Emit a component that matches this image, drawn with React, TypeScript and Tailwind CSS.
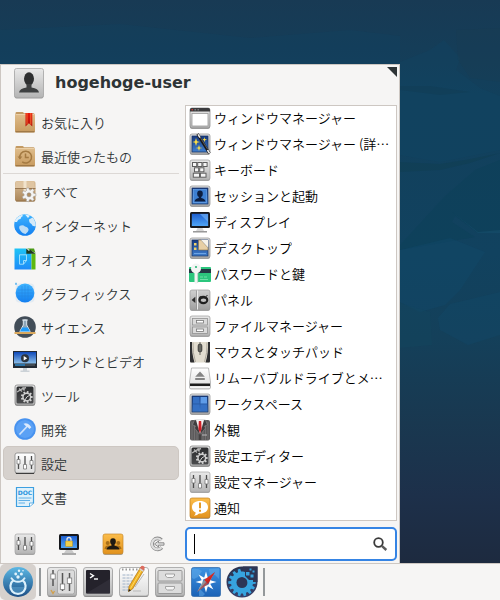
import { useState } from 'react';
import type { ReactNode } from 'react';

interface IconProps {
  size?: number;
  children?: ReactNode;
}

interface Entry {
  label: string;
  icon: ReactNode;
}

function Icon({ size = 22, children }: IconProps) {
  return (
    <svg
      width={size}
      height={size}
      viewBox={`0 0 ${size} ${size}`}
      fill="none"
      aria-hidden="true"
      className="shrink-0 overflow-visible"
    >
      {children}
    </svg>
  );
}

function gear(cx: number, cy: number, outer: number, inner: number, teeth: number) {
  const step = (Math.PI * 2) / teeth;
  const points: string[] = [];
  for (let i = 0; i < teeth; i++) {
    const a = i * step;
    const corners: [number, number][] = [
      [inner, -0.32],
      [outer, -0.2],
      [outer, 0.2],
      [inner, 0.32],
    ];
    corners.forEach(([r, k]) => {
      points.push(
        `${(cx + r * Math.cos(a + k * step)).toFixed(2)} ${(cy + r * Math.sin(a + k * step)).toFixed(2)}`,
      );
    });
  }
  return `M${points.join('L')}Z`;
}

// gradients shared by all the icons
const gradients: [string, string, string][] = [
  ['silver', '#e9e9e9', '#b4b4b4'],
  ['white', '#ffffff', '#dcdcdc'],
  ['grey', '#cfcfcf', '#9f9f9f'],
  ['dark', '#2b2c2e', '#4b4c4e'],
  ['navy', '#16397f', '#3f7fd0'],
  ['screen', '#1d5fd0', '#4fa4f5'],
  ['folder', '#dfbd8c', '#c79a5e'],
  ['box', '#d9bd97', '#a98457'],
  ['orange', '#fbbd4b', '#e2921d'],
  ['sky', '#1fc4f6', '#1e8bf8'],
  ['globe', '#3fb4ff', '#137ff0'],
  ['red', '#e8190c', '#b30f08'],
  ['video', '#0f48b8', '#8cc0ea'],
  ['xfce', '#5cb8e4', '#1d4f86'],
  ['compass', '#3d92e2', '#1b62b6'],
  ['logo', '#2a3350', '#38406a'],
];

function Gradients() {
  return (
    <svg className="absolute size-0" aria-hidden="true">
      <defs>
        {gradients.map(([id, from, to]) => (
          <linearGradient key={id} id={id} x1="0" y1="0" x2="0" y2="1">
            <stop offset="0" stopColor={from} />
            <stop offset="1" stopColor={to} />
          </linearGradient>
        ))}
      </defs>
    </svg>
  );
}

function Tile({ fill = 'url(#silver)', stroke = '#9b9b9b' }: { fill?: string; stroke?: string }) {
  return (
    <>
      <rect x="1" y="2" width="20" height="20" rx="2" fill="#6e6e6e" opacity="0.6" />
      <rect x="1" y="1" width="20" height="20" rx="2" fill={fill} stroke={stroke} strokeWidth="0.7" />
    </>
  );
}

function FolderShape() {
  return (
    <>
      <path d="M1.5 3.5V2.2Q1.5 1 2.7 1H8.5Q9.5 1 9.8 2.2H19.5Q20.5 2.2 20.5 3.5V8H1.5Z" fill="#c39a63" />
      <rect x="1" y="3" width="20" height="18.5" rx="1.5" fill="url(#folder)" />
      <path d="M1.5 20.8H20.5" stroke="#8f6c3d" />
      <path d="M2 3.5H20" stroke="#efd6ae" strokeWidth="0.8" />
    </>
  );
}

function FavoritesIcon() {
  return (
    <Icon>
      <FolderShape />
      <path d="M11.5 2H18.3V15.5L14.9 12.3L11.5 15.5Z" fill="url(#red)" />
      <path d="M13 2V13.5M16.8 2V13.5" stroke="#ff7d3b" strokeWidth="0.8" />
    </Icon>
  );
}

function RecentIcon() {
  return (
    <Icon>
      <FolderShape />
      <path d="M6 13.5A5.9 5.9 0 1 1 8.2 16.8" stroke="#a47a42" strokeWidth="1.5" />
      <path d="M3.5 11.5H8.3L6 14.5Z" fill="#a47a42" />
      <path d="M11.5 8.5V12.5H14.8" stroke="#a47a42" strokeWidth="1.5" />
    </Icon>
  );
}

function AllIcon() {
  return (
    <Icon>
      <rect x="1" y="1" width="20.5" height="20.5" rx="2" fill="url(#box)" />
      <path d="M2 1.5H20L21 8H1Z" fill="#dfc5a2" />
      <path d="M9.5 1H12.5V11H9.5Z" fill="#f1e3cc" />
      <path d="M1 8.5H21.5M2 21H20.5" stroke="#8b6a42" strokeWidth="0.8" />
      <path d={gear(15, 14.8, 7, 5, 7)} fill="#f4f4f4" stroke="#a7a19a" strokeWidth="0.6" />
      <circle cx="15" cy="14.8" r="2" fill="#b18d60" stroke="#8f8a83" strokeWidth="0.6" />
    </Icon>
  );
}

function InternetIcon() {
  return (
    <Icon>
      <circle cx="11" cy="11" r="10.8" fill="url(#globe)" />
      <path d="M.6 8Q2 2.5 8 .7L9 2Q7 2.7 6.5 5Q4 5 3 8Z" fill="#dff0fb" />
      <path d="M5.5 12Q9 10.5 11 12.5Q14.5 13 14.6 16Q14 18.5 11.5 20Q8 19.5 6 16Q4.5 14 5.5 12Z" fill="#bcdcf5" />
      <path d="M15 5.5L18.5 3.5Q21.8 7 21.7 12Q18.5 13 17.5 10Q15 9 15 5.5Z" fill="#d3e9f9" />
      <path d="M11 .4L16 1.5L14 4Z" fill="#e3f1fb" />
    </Icon>
  );
}

function OfficeIcon() {
  return (
    <Icon>
      <path d="M0.5 .5H12L17.5 6V21.5H0.5Z" fill="url(#sky)" />
      <path d="M17.5 5.5H21.5V21.5H17.5Z" fill="#5fb80e" />
      <path d="M13 .5H20L21.5 5Z" fill="#4b9b16" />
      <path d="M12.3 .5V5.7H21.5L16 1.5L15 3Z" fill="#203a20" />
      <path d="M5.5 6.8H12.5V12.5L9.5 16.2H5.5ZM12.5 12.5H9.5V16.2" stroke="#a7e2fd" strokeWidth="0.9" />
    </Icon>
  );
}

function GraphicsIcon() {
  return (
    <Icon>
      <rect x="1.5" y="1.5" width="19" height="19" rx="4" fill="#e3ebf2" />
      <circle cx="11" cy="11" r="9.4" fill="url(#globe)" />
      <path d="M4 8H18M3 11H19M4 14H18M8 4V18M11 3V19M14 4V18" stroke="#2787df" strokeWidth="0.5" />
      <rect x="1" y="0.8" width="2" height="2" fill="#74bff0" />
    </Icon>
  );
}

function ScienceIcon() {
  return (
    <Icon>
      <circle cx="11" cy="11" r="10.8" fill="#424d58" />
      <path d="M8.2 4H13.8M9.3 4V9L5.8 15.5H16.2L12.7 9V4Z" fill="#8da6b8" stroke="#dce6ee" strokeWidth="1" />
      <path d="M8.2 11.5H13.8L16 15.6H6Z" fill="#1d9bfb" />
      <rect x="0.5" y="16" width="21" height="2" fill="#d9a75c" />
    </Icon>
  );
}

function VideoIcon() {
  return (
    <Icon>
      <rect x="-1" y="1" width="24" height="17" fill="#232a33" />
      <rect x="0" y="2" width="22" height="11.5" fill="url(#video)" />
      <circle cx="11" cy="8.2" r="4" fill="#2c343d" />
      <path d="M9.7 6L13.2 8.2L9.7 10.4Z" fill="#fff" />
      <path d="M1 15H11" stroke="#34a4f5" strokeWidth="1.2" />
      <path d="M11 15H21" stroke="#5a626b" strokeWidth="1.2" />
      <path d="M9 18H13V20.5H15.5V22H6.5V20.5H9Z" fill="#ccd2d7" />
    </Icon>
  );
}

function GearsIcon() {
  return (
    <Icon>
      <Tile stroke="#777777" />
      <rect x="2.5" y="2.5" width="17" height="17" rx="1.5" fill="url(#dark)" />
      <path d={gear(12.8, 13, 6, 4.4, 9)} fill="#d0d0d0" />
      <circle cx="12.8" cy="13" r="3.1" fill="#333436" />
      <path d="M12.8 13L16 11M12.8 13L11 16" stroke="#d0d0d0" />
      <path d="M3 8L8 5L12 3.5M5 4.5L8 7.5M8.5 3.5L10.5 6.5" stroke="#b4b4b4" strokeWidth="1.4" />
    </Icon>
  );
}

function DevelopmentIcon() {
  return (
    <Icon>
      <circle cx="11" cy="11" r="10.8" fill="#4792ef" />
      <circle cx="11" cy="11" r="9" fill="#5ba1f5" />
      <path d="M5.5 16.5L13.5 8" stroke="#cfe3fc" strokeWidth="1.8" />
      <path d="M9.5 5.8Q13 4.5 15.5 7L17.3 9.3L15.5 11L13.5 9L12 8.2Z" fill="#dceafd" />
    </Icon>
  );
}

function MixerIcon({ bright = false }: { bright?: boolean }) {
  return (
    <Icon>
      <Tile fill={bright ? 'url(#white)' : 'url(#silver)'} stroke={bright ? '#777777' : '#a4a4a4'} />
      {bright && <path d="M2 21.5H20" stroke="#3c3c3c" />}
      <path d="M4.5 4V17M11 4V17M17.5 4V17" stroke="#4d4d4d" strokeWidth="1.3" />
      <path d="M3 7.5H6V12H3ZM9.5 12.5H12.5V17H9.5ZM16 8.5H19V13H16Z" fill="#fff" stroke="#777" strokeWidth="0.8" />
    </Icon>
  );
}

function DocumentIcon() {
  return (
    <Icon>
      <path d="M2.5 1.5H19.5V17L15.5 20.5H2.5Z" fill="#dff1fb" stroke="#3d9fe0" strokeWidth="1.2" />
      <text x="11" y="9" textAnchor="middle" fontSize="6" fontWeight="700" fontFamily="DejaVu Sans, sans-serif" fill="#2a93de">
        DOC
      </text>
      <path d="M4.5 12H17.5M4.5 14.5H16M4.5 17H11" stroke="#62b0e6" />
      <path d="M15.5 20.5V17H19.5" fill="#fff" stroke="#3d9fe0" strokeWidth="0.8" />
    </Icon>
  );
}

function LockIcon() {
  return (
    <Icon>
      <rect x="1" y="1" width="20" height="16" rx="1.5" fill="#15171b" />
      <rect x="3" y="3" width="16" height="12" fill="url(#screen)" />
      <path d="M8 17H14L16 20H6Z" fill="#c9c9c9" />
      <path d="M4 21H18" stroke="#777" strokeWidth="1.2" />
      <path d="M9 9V6.5A2 2 0 0 1 13 6.5V9" stroke="#e8e8e8" strokeWidth="1.3" />
      <rect x="7.5" y="8" width="7" height="5.5" rx="0.5" fill="#f1cf4b" stroke="#b58b1a" strokeWidth="0.5" />
    </Icon>
  );
}

function UsersIcon() {
  return (
    <Icon>
      <Tile fill="url(#orange)" stroke="#c98b2c" />
      <circle cx="5.7" cy="10" r="2" fill="#a86f19" />
      <circle cx="16.3" cy="10" r="2" fill="#a86f19" />
      <path d="M2.5 16Q3 12.5 5.7 12.5H16.3Q19 12.5 19.5 16Z" fill="#a86f19" />
      <ellipse cx="11" cy="8.5" rx="2.8" ry="3.2" fill="#1e1a13" />
      <path d="M4.5 16.5Q5 13.5 9.5 12.8V11H12.5V12.8Q17 13.5 17.5 16.5Z" fill="#1e1a13" />
    </Icon>
  );
}

function LogoutIcon() {
  return (
    <Icon>
      <path d="M15.5 7A5.5 5.5 0 1 0 15.8 14.5" stroke="#8c8c8c" strokeWidth="3.6" />
      <path d="M15.2 7.2A5.4 5.4 0 1 0 15.5 14.2" stroke="#dedede" strokeWidth="2.2" />
      <path d="M8.5 11L12.5 8V9.8H18V12.2H12.5V14Z" fill="#dedede" stroke="#858585" strokeWidth="0.9" />
    </Icon>
  );
}

function WindowIcon() {
  return (
    <Icon>
      <Tile stroke="#848484" />
      <path d="M1 4.5V2.5Q1 1 2.5 1H19.5Q21 1 21 2.5V4.5Z" fill="#3b3b3d" />
      <circle cx="3.2" cy="2.8" r="0.8" fill="#e33e35" />
      <path d="M5.5 2.8H7M8.5 2.8H10" stroke="#929292" />
      <rect x="3" y="6.5" width="16" height="12.5" fill="#fff" stroke="#9a9a9a" strokeWidth="0.8" />
    </Icon>
  );
}

function BluePanel({ children }: { children?: ReactNode }) {
  return (
    <Icon>
      <Tile stroke="#8a8a8a" />
      <rect x="3" y="3" width="16" height="16" fill="url(#navy)" stroke="#1b3565" strokeWidth="0.8" />
      {children}
    </Icon>
  );
}

function TweaksIcon() {
  return (
    <BluePanel>
      <path
        d="M7 5L8 8.2L11 9L8 9.8L7 13L6 9.8L3.5 9L6 8.2ZM10 12L10.8 14.4L13.5 15L10.8 15.6L10 18L9.2 15.6L6.5 15L9.2 14.4ZM15.5 4L16 6L18 6.7L16 7.3L15.5 9.3L15 7.3L13 6.7L15 6Z"
        fill="#ffdf42"
      />
      <path d="M8.5 1L20.5 20.5" stroke="#19191b" strokeWidth="2.6" />
      <path d="M9 1.3L11 4.6M18.5 17L20.5 20.3" stroke="#eee" strokeWidth="1.6" />
      <path d="M11 4L18.5 16" stroke="#8b8b8b" strokeWidth="0.6" />
    </BluePanel>
  );
}

function KeyboardIcon() {
  return (
    <Icon>
      <Tile />
      <g fill="#f5f5f5" stroke="#5e5e5e" strokeWidth="1">
        <rect x="3.5" y="3.5" width="4.2" height="4" />
        <rect x="8.7" y="3.5" width="4.2" height="4" />
        <rect x="13.9" y="3.5" width="4.2" height="4" />
        <rect x="5.5" y="8.8" width="4.2" height="4" />
        <rect x="10.7" y="8.8" width="4.2" height="4" />
        <rect x="4.3" y="14.2" width="6.2" height="4" />
        <rect x="11.4" y="14.2" width="5.6" height="4" />
      </g>
    </Icon>
  );
}

function SessionIcon() {
  return (
    <BluePanel>
      <rect x="4.5" y="4.5" width="13" height="13" fill="#3d7fd2" stroke="#6ca6ea" strokeWidth="0.7" />
      <ellipse cx="11" cy="8.8" rx="2.8" ry="3.3" fill="#0c1d3f" />
      <path d="M5.5 16.5Q6 13.5 9.8 13V11H12.2V13Q16 13.5 16.5 16.5Z" fill="#0c1d3f" />
    </BluePanel>
  );
}

function DisplayIcon() {
  return (
    <Icon>
      <rect x="1" y="1" width="20" height="16" rx="1.5" fill="#17181c" />
      <rect x="2.8" y="2.8" width="16.4" height="12.2" fill="url(#screen)" />
      <path d="M11 3H19V11Z" fill="#7ab9f9" opacity="0.6" />
      <path d="M8.5 17H13.5L15 20H7Z" fill="#d7d7d7" />
      <path d="M4 20.8H18" stroke="#878787" strokeWidth="1.3" />
    </Icon>
  );
}

function DesktopIcon() {
  return (
    <BluePanel>
      <path d="M5 6H7.5V8.5H5ZM5 10.5H7.5V13H5Z" fill="#f2d36a" />
      <path d="M9.5 3H12L19 10.5V13H9.5Z" fill="#e7cfa5" stroke="#8b7448" strokeWidth="0.6" />
      <path d="M12 3H19V10.5Z" fill="#f7f3ea" />
      <path d="M5 16.5H17" stroke="#6da4e4" />
    </BluePanel>
  );
}

function PasswordIcon() {
  return (
    <Icon>
      <rect x="0" y="4" width="22" height="15" rx="1" fill="#2bc67d" />
      <rect x="0" y="6" width="22" height="4" fill="#243a45" />
      <path d="M11 14H14M15 14H18M11 16.5H19" stroke="#6fe0a8" />
      <circle cx="7" cy="5.5" r="5" fill="#f3f5f4" />
      <path d="M5.5 9H8.7V19L7 21.5L5.5 20Z" fill="#f3f5f4" />
      <circle cx="7" cy="4" r="1.1" fill="#2bb676" />
      <path d="M8.7 10V20" stroke="#c3cdc9" strokeWidth="0.7" />
    </Icon>
  );
}

function PanelIcon() {
  return (
    <Icon>
      <Tile fill="url(#grey)" />
      <path d="M8.5 1.5V20.5" stroke="#ececec" />
      <path d="M7.5 1.5V20.5" stroke="#8c8c8c" strokeWidth="0.7" />
      <path d="M6.3 7.7V14L2.6 11Z" fill="#2d2d2d" />
      <ellipse cx="14.3" cy="11" rx="5" ry="4.2" fill="#202020" />
      <ellipse cx="14.5" cy="11.2" rx="2.8" ry="1.7" fill="#c2c2c2" />
      <path d="M10 8.5L12 7.5M17 7.3L18.5 6.5" stroke="#202020" />
    </Icon>
  );
}

function CabinetIcon() {
  return (
    <Icon>
      <Tile />
      <g fill="#dadada" stroke="#929292" strokeWidth="0.8">
        <rect x="3.5" y="3.5" width="15" height="6.5" />
        <rect x="3.5" y="12" width="15" height="6.5" />
      </g>
      <g fill="#fff" stroke="#777" strokeWidth="0.8">
        <rect x="7.5" y="5.5" width="7" height="2.5" />
        <rect x="7.5" y="14" width="7" height="2.5" />
      </g>
    </Icon>
  );
}

function MouseIcon() {
  return (
    <Icon>
      <rect x="1" y="1" width="20" height="20.5" rx="1.5" fill="#e2ddd0" />
      <path d="M1 1H3Q2.5 12 5.5 21.5H2Q1 21.5 1 20ZM21 1H19Q19.5 12 16.5 21.5H20Q21 21.5 21 20Z" fill="#2e2f31" />
      <path d="M4 1.5Q3.5 12 6.5 21M18 1.5Q18.5 12 15.5 21" stroke="#a9a498" strokeWidth="0.9" />
      <rect x="9.2" y="3" width="3.6" height="8" rx="1.8" fill="#696963" stroke="#333" strokeWidth="0.9" />
      <path d="M11 1V3M11 11V14" stroke="#6c6a63" />
    </Icon>
  );
}

function RemovableIcon() {
  return (
    <Icon>
      <path d="M2.5 1H19.5L21.5 15V20Q21.5 22 20 22H2Q.5 22 .5 20V15Z" fill="url(#white)" stroke="#a2a2a2" strokeWidth="0.7" />
      <path d="M1 16.5H21V19H1Z" fill="#1d1d1d" />
      <path d="M1 20.2H21" stroke="#fff" />
      <path d="M11 4.5L15.8 9.8H6.2Z" fill="#858585" />
      <rect x="6.2" y="11" width="9.6" height="2" fill="#858585" />
    </Icon>
  );
}

function WorkspaceIcon() {
  return (
    <BluePanel>
      <path d="M4 4H10.5V10.5H4ZM4 11.5H10.5V18H4ZM11.5 11.5H18V18H11.5Z" fill="#3570c4" />
      <path d="M11.5 4H18V10.5H11.5Z" fill="#5f9ce8" />
    </BluePanel>
  );
}

function AppearanceIcon() {
  return (
    <Icon>
      <rect x="1" y="1" width="20" height="20.5" rx="2" fill="#5c5a5b" />
      <path d="M3 3V21M5.5 4V21M8 10V21M14 10V21M16.5 4V21M19 3V21" stroke="#7d7b7c" strokeWidth="0.7" />
      <path d="M5.5 1L3.5 6L6.5 7L5.5 9L11 16L16.5 9L15.5 7L18.5 6L16.5 1Z" fill="#403e3f" stroke="#979596" strokeWidth="0.5" />
      <path d="M7 1H15L11 15Z" fill="#f2f0f0" />
      <path d="M9.8 2H12.2L12.6 10L11 14L9.4 10Z" fill="#cf1f25" />
      <path d="M13 16H18" stroke="#b9b7b8" />
      <path d="M11 15V21" stroke="#2c2a2b" />
    </Icon>
  );
}

function NotificationIcon() {
  return (
    <Icon>
      <Tile fill="url(#orange)" stroke="#c07f20" />
      <path d="M11 4C6 4 3 6.5 3 10.2C3 12.6 4.5 14.5 6.7 15.5Q6.7 17.5 5 18.7Q8.5 18.5 10 16.5H11C16 16.5 19 13.8 19 10.2C19 6.5 16 4 11 4Z" fill="#fff" />
      <path d="M11 5.5V11.3M11 12.8V14.8" stroke="#e39a25" strokeWidth="2" />
    </Icon>
  );
}

function AvatarIcon() {
  return (
    <Icon size={30}>
      <rect x="0.5" y="1.5" width="29" height="29" rx="2" fill="#999" />
      <rect x="0.5" y="0.5" width="29" height="29" rx="2" fill="url(#silver)" stroke="#a8a8a8" strokeWidth="0.8" />
      <ellipse cx="15" cy="10.8" rx="5" ry="6.5" fill="#2e2f30" />
      <path d="M5 24.5Q5.5 20.5 12.5 19.5V16H17.5V19.5Q24.5 20.5 25 24.5Z" fill="#3e4041" />
    </Icon>
  );
}

function BigTile({ fill = 'url(#silver)' }: { fill?: string }) {
  return (
    <>
      <rect x="0.5" y="1.5" width="29" height="28.5" rx="2.5" fill="#858585" />
      <rect x="0.5" y="0.5" width="29" height="28.5" rx="2.5" fill={fill} stroke="#a0a0a0" strokeWidth="0.8" />
    </>
  );
}

function StartIcon() {
  return (
    <Icon size={30}>
      <circle cx="15" cy="15" r="15" fill="url(#xfce)" />
      <path d="M10.5 13.2A7.6 7.6 0 1 0 19.5 13.2" stroke="#dcf0fb" strokeWidth="2.2" />
      <path d="M8.5 11.2Q11 14.8 15 14.8T21.5 11.2" stroke="#dcf0fb" strokeWidth="2" strokeLinecap="round" />
      <path d="M8.6 20H21.4Q20.5 25.5 15 25.8T8.6 20Z" fill="#6bb3dc" opacity="0.4" />
      <g fill="#e2f3fc">
        <circle cx="15" cy="10" r="1.7" />
        <circle cx="18.4" cy="7" r="1.5" />
        <circle cx="12.7" cy="7" r="1.4" />
        <circle cx="16" cy="3.8" r="1.2" />
        <circle cx="20" cy="3.8" r="0.8" />
      </g>
    </Icon>
  );
}

function BigMixerIcon() {
  return (
    <Icon size={30}>
      <BigTile />
      <rect x="10.5" y="3" width="17" height="24" rx="2" fill="#dcdcdc" stroke="#a1a1a1" strokeWidth="0.8" />
      <path d="M6 3V19M15.5 6V24M22.5 6V24" stroke="#555" strokeWidth="1.5" />
      <g fill="#fff" stroke="#7c7c7c" strokeWidth="0.8">
        <rect x="3.8" y="7" width="4.4" height="5" />
        <rect x="13.3" y="17" width="4.4" height="5.5" />
        <rect x="20.3" y="11" width="4.4" height="5.5" />
      </g>
      <path d="M4 23L6 26.5L7.5 24" stroke="#d3a04a" strokeWidth="1.3" />
    </Icon>
  );
}

function TerminalIcon() {
  return (
    <Icon size={30}>
      <BigTile />
      <rect x="3" y="3" width="24" height="23.5" rx="1" fill="#24222b" />
      <path d="M3 26.5L27 12V26.5Z" fill="#35323d" opacity="0.7" />
      <path d="M7 6.5L10.5 8.7L7 11" stroke="#fff" strokeWidth="1.4" />
      <path d="M11 12H15" stroke="#fff" strokeWidth="1.4" />
    </Icon>
  );
}

function EditorIcon() {
  return (
    <Icon size={30}>
      <BigTile fill="url(#white)" />
      <path d="M3 2.5H27" stroke="#9a9a9a" strokeWidth="2" strokeDasharray="1.5 2" />
      <path d="M3.5 8H14M3.5 11H12.5M3.5 14H13M3.5 17H11.5M3.5 20H11M3.5 23H10" stroke="#a0b2c8" strokeDasharray="3 1" />
      <path d="M16 20L25 7M14 24H22" stroke="#b9b9b9" />
      <path d="M21.5 .5L25 2.8L13.5 22L9.5 24.5L10 19.5Z" fill="#f2b321" stroke="#a86f12" strokeWidth="0.7" />
      <path d="M23 2L11.5 21.5" stroke="#fbd868" />
      <path d="M20.8 1.5L22.3 -1Q24.5 -2 25.8 .2L24.5 4Z" fill="#dc6b5e" />
      <path d="M20.7 1.8L24.3 4.1" stroke="#d6d6d6" strokeWidth="1.6" />
      <path d="M10 22L9.3 24.8L12 23.5Z" fill="#222" />
    </Icon>
  );
}

function BigCabinetIcon() {
  return (
    <Icon size={30}>
      <BigTile />
      <g fill="#dcdcdc" stroke="#919191" strokeWidth="0.9">
        <rect x="3" y="3.5" width="24" height="10.5" rx="1" />
        <rect x="3" y="16" width="24" height="10.5" rx="1" />
      </g>
      <g fill="#f4f4f4" stroke="#919191" strokeWidth="0.8">
        <path d="M10.5 7H19.5V9L17.5 10.5H12.5L10.5 9Z" />
        <path d="M10.5 19.5H19.5V21.5L17.5 23H12.5L10.5 21.5Z" />
      </g>
    </Icon>
  );
}

function BrowserIcon() {
  return (
    <Icon size={30}>
      <rect x="0.5" y="0.5" width="29" height="29" rx="2" fill="url(#compass)" stroke="#2b65a8" strokeWidth="0.7" />
      <path d="M1 2Q7 1 11 4L7 10L3 12L1 11ZM18 2L28 1.5V12L24 8L19 9ZM8 21L14 27L12 29H8Z" fill="#66ade9" opacity="0.5" />
      <path d="M15 4.5L16.8 10.8L22.4 7.6L19.2 13.2L25.5 15L19.2 16.8L22.4 22.4L16.8 19.2L15 25.5L13.2 19.2L7.6 22.4L10.8 16.8L4.5 15L10.8 13.2L7.6 7.6L13.2 10.8Z" fill="#fff" />
      <circle cx="15" cy="15" r="4" fill="#3584d2" stroke="#fff" strokeWidth="1.2" />
      <path d="M24 5L17 17L13 13Z" fill="#dd2a20" />
      <path d="M6 25L13 13L17 17Z" fill="#8d9298" />
      <path d="M6 25L24 5L17 17Z" fill="#b7272b" opacity="0.6" />
    </Icon>
  );
}

function LogoIcon() {
  return (
    <Icon size={30}>
      <path d="M15 -.5H30.5V15A15.5 15.5 0 1 1 15 -.5Z" fill="url(#logo)" />
      <path d={gear(15, 15.5, 13.8, 11, 14)} fill="#37a4df" />
      <circle cx="15" cy="15.5" r="5.5" fill="#2d3656" />
      <path d="M16 15V-.5H30.5V15Z" fill="#2d3554" />
      <path d="M16 10.2V4.5L18 5V9L22 13H26V15.5H20.4Q20 11 16 10.2Z" fill="#37a4df" />
      <g fill="#37a4df">
        <rect x="19" y="5" width="3.5" height="3.5" />
        <rect x="23.5" y="7.5" width="3" height="3" />
        <rect x="22.5" y="1.5" width="2" height="2" />
        <rect x="25.5" y="3.5" width="2" height="2" />
      </g>
    </Icon>
  );
}

function SearchIcon() {
  return (
    <Icon size={16}>
      <circle cx="6.5" cy="6.5" r="4.3" stroke="#3a3a3a" strokeWidth="1.8" />
      <path d="M9.8 9.8L14.3 14" stroke="#5a5a5a" strokeWidth="2.4" />
    </Icon>
  );
}

const pinned: Entry[] = [
  { label: 'お気に入り', icon: <FavoritesIcon /> },
  { label: '最近使ったもの', icon: <RecentIcon /> },
];

const categories: Entry[] = [
  { label: 'すべて', icon: <AllIcon /> },
  { label: 'インターネット', icon: <InternetIcon /> },
  { label: 'オフィス', icon: <OfficeIcon /> },
  { label: 'グラフィックス', icon: <GraphicsIcon /> },
  { label: 'サイエンス', icon: <ScienceIcon /> },
  { label: 'サウンドとビデオ', icon: <VideoIcon /> },
  { label: 'ツール', icon: <GearsIcon /> },
  { label: '開発', icon: <DevelopmentIcon /> },
  { label: '設定', icon: <MixerIcon bright /> },
  { label: '文書', icon: <DocumentIcon /> },
];

const launchers: Entry[] = [
  { label: 'ウィンドウマネージャー', icon: <WindowIcon /> },
  { label: 'ウィンドウマネージャー (詳…', icon: <TweaksIcon /> },
  { label: 'キーボード', icon: <KeyboardIcon /> },
  { label: 'セッションと起動', icon: <SessionIcon /> },
  { label: 'ディスプレイ', icon: <DisplayIcon /> },
  { label: 'デスクトップ', icon: <DesktopIcon /> },
  { label: 'パスワードと鍵', icon: <PasswordIcon /> },
  { label: 'パネル', icon: <PanelIcon /> },
  { label: 'ファイルマネージャー', icon: <CabinetIcon /> },
  { label: 'マウスとタッチパッド', icon: <MouseIcon /> },
  { label: 'リムーバブルドライブとメ…', icon: <RemovableIcon /> },
  { label: 'ワークスペース', icon: <WorkspaceIcon /> },
  { label: '外観', icon: <AppearanceIcon /> },
  { label: '設定エディター', icon: <GearsIcon /> },
  { label: '設定マネージャー', icon: <MixerIcon /> },
  { label: '通知', icon: <NotificationIcon /> },
];

const commands: Entry[] = [
  { label: 'すべての設定', icon: <MixerIcon /> },
  { label: '画面をロック', icon: <LockIcon /> },
  { label: 'ユーザーの切り替え', icon: <UsersIcon /> },
  { label: 'ログアウト', icon: <LogoutIcon /> },
];

const dock: Entry[] = [
  { label: '設定マネージャー', icon: <BigMixerIcon /> },
  { label: 'ターミナル', icon: <TerminalIcon /> },
  { label: 'テキストエディター', icon: <EditorIcon /> },
  { label: 'ファイルマネージャー', icon: <BigCabinetIcon /> },
  { label: 'ウェブブラウザー', icon: <BrowserIcon /> },
  { label: 'コントロールセンター', icon: <LogoIcon /> },
];

interface CategoryButtonProps {
  entry: Entry;
  active: boolean;
  onSelect: (label: string) => void;
}

function CategoryButton({ entry, active, onSelect }: CategoryButtonProps) {
  return (
    <button
      type="button"
      aria-pressed={active}
      onClick={() => onSelect(entry.label)}
      className={`flex h-[34px] w-full items-center gap-[5px] rounded-[5px] border pl-2.5 text-left ${
        active ? 'border-[#cdc7c2] bg-[#d6d1cd]' : 'border-transparent'
      }`}
    >
      {entry.icon}
      <span className="pt-0.5">{entry.label}</span>
    </button>
  );
}

function WhiskerMenu() {
  const [category, setCategory] = useState('設定');
  const [query, setQuery] = useState('');

  return (
    <section className="w-4/5 min-w-[400px] border border-b-0 border-[#cdc7c2] bg-[#f6f5f4] px-0.5 pb-0.5">
      <header className="mb-1 flex h-9 items-center gap-[11px] pl-[11px]">
        <AvatarIcon />
        <h1 className="flex-1 font-['DejaVu_Sans',sans-serif] text-base leading-5 font-bold">
          hogehoge-user
        </h1>
        <button type="button" aria-label="サイズ変更" className="mt-0.5 self-start">
          <Icon size={10}>
            <path d="M0 0H10V10Z" fill="#2e3436" />
          </Icon>
        </button>
      </header>

      <div className="grid grid-cols-[176px_minmax(0,1fr)] gap-1.5">
        <nav>
          {pinned.map((entry) => (
            <CategoryButton key={entry.label} entry={entry} active={entry.label === category} onSelect={setCategory} />
          ))}
          <hr className="border-[#dcd8d5]" />
          {categories.map((entry) => (
            <CategoryButton key={entry.label} entry={entry} active={entry.label === category} onSelect={setCategory} />
          ))}
        </nav>

        <ul className="flex h-[416px] flex-col justify-center overflow-hidden border border-[#cdc7c2] bg-white text-black">
          {launchers.map((entry) => (
            <li key={entry.label} className="h-[26px] shrink-0">
              <button type="button" className="flex h-full w-full items-center gap-[3px] pl-[3px] text-left">
                {entry.icon}
                <span className="truncate">{entry.label}</span>
              </button>
            </li>
          ))}
        </ul>

        <div className="grid grid-cols-4">
          {commands.map((entry) => (
            <button key={entry.label} type="button" aria-label={entry.label} className="flex items-center justify-center">
              {entry.icon}
            </button>
          ))}
        </div>

        <label className="flex h-[34px] items-center rounded-[5px] border-2 border-[#3584e4] bg-white px-[7px]">
          <span className="h-5 w-px bg-black" />
          <input
            type="text"
            aria-label="検索"
            value={query}
            onChange={(e) => setQuery(e.target.value)}
            className="min-w-0 flex-1 bg-transparent caret-transparent outline-none"
          />
          <SearchIcon />
        </label>
      </div>
    </section>
  );
}

function Wallpaper() {
  return (
    <svg
      viewBox="0 0 500 563"
      preserveAspectRatio="none"
      aria-hidden="true"
      className="absolute inset-0 h-full w-full"
    >
      <path d="M0 30L120 24L250 38L350 30L400 36L400 64H0Z" fill="#0f4767" opacity="0.2" />
      <path d="M400 62L430 50L444 40L460 58L456 70L480 88L500 96V150L440 162L400 155Z" fill="#0f4869" opacity="0.25" />
      <path d="M456 30L500 28V82L470 78L458 60Z" fill="#1b3a50" opacity="0.25" />
      <path d="M400 86L430 86L470 92L440 95L400 90Z" fill="#12394f" opacity="0.35" />
      <path d="M400 162L440 164L465 160L500 153L470 163L440 170L400 172Z" fill="#0f3d50" opacity="0.5" />
      <path d="M400 245L445 196L475 170L500 160V232L478 233L455 216L452 222L475 237L400 250Z" fill="#0c4058" opacity="0.5" />
      <path d="M452 212L478 232L500 230V233H478Z" fill="#1d5878" opacity="0.35" />
      <path d="M400 250L450 238L485 252L460 290L445 305L420 312L400 302Z" fill="#124a6c" opacity="0.35" />
      <path d="M438 318L450 304L500 292V335L468 345L440 330Z" fill="#124868" opacity="0.4" />
      <path d="M400 303L430 312L432 345L400 348Z" fill="#14485f" opacity="0.3" />
    </svg>
  );
}

function Divider() {
  return (
    <div className="flex w-2 justify-center">
      <span className="h-7 w-0.5 bg-[#94989a]" />
    </div>
  );
}

export default function App() {
  return (
    <div className="flex min-h-screen flex-col font-['Noto_Sans_CJK_JP',sans-serif] text-[13px] leading-5 font-[350] text-[#2e3436]">
      <Gradients />
      <main className="relative flex flex-1 items-end bg-[linear-gradient(#183a54,#12405c_17%,#11425f_45%,#14405a_60%,#193850_75%,#1d304a_88%,#1d2a3f)]">
        <Wallpaper />
        <div className="relative w-full">
          <WhiskerMenu />
        </div>
      </main>

      <footer className="flex h-[37px] items-center border-t border-[#cdc7c2] bg-[#f6f5f4]">
        <button
          type="button"
          aria-label="アプリケーション"
          className="flex size-9 items-center justify-center rounded-[5px] bg-[#d6d1cd]"
        >
          <StartIcon />
        </button>
        <Divider />
        {dock.map((entry) => (
          <button key={entry.label} type="button" aria-label={entry.label} className="flex size-9 items-center justify-center">
            {entry.icon}
          </button>
        ))}
        <Divider />
      </footer>
    </div>
  );
}
